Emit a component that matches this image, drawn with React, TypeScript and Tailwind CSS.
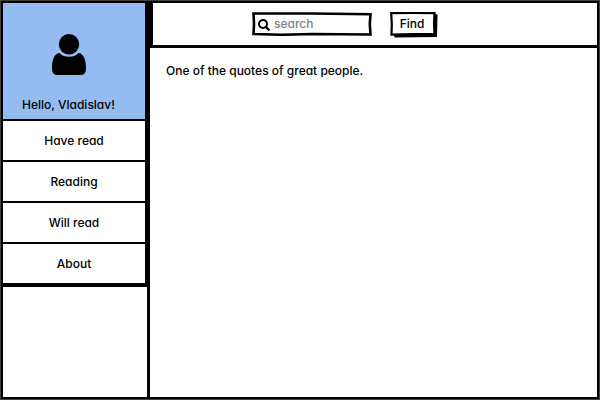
import React from "react";

const links = ["Have read", "Reading", "Will read", "About"];

function UserIcon() {
  return (
    <svg viewBox="0 0 34 42" className="h-[42px] w-[34px]" aria-hidden="true">
      <circle cx="17" cy="10.2" r="10.2" />
      <path d="M7.5 19 C10 21.7 13 22.8 17 22.8 C21 22.8 24 21.7 26.5 19 C31 19.2 34 25 34 34 C34 38.5 32.5 41 28.5 41 L5.5 41 C1.5 41 0 38.5 0 34 C0 25 3 19.2 7.5 19 Z" />
    </svg>
  );
}

function SearchIcon() {
  return (
    <svg viewBox="0 0 12 12" className="pointer-events-none absolute left-[6px] top-[7px] h-3 w-3" fill="none" stroke="black" aria-hidden="true">
      <circle cx="5" cy="5" r="4" strokeWidth="2" />
      <path d="M8 8 L10.7 10.7" strokeWidth="2.3" strokeLinecap="round" />
    </svg>
  );
}

export default function App() {
  return (
    <div className="flex min-h-screen bg-neutral-700 p-px font-['Inter','Liberation_Sans',sans-serif] text-xs leading-5 font-medium text-black [font-feature-settings:'cv11']">
      <div className="flex min-w-0 grow border-2 border-black bg-white">
        <aside className="w-[147px] shrink-0 border-r-[3px] border-black">
          <div className="border-b-4 border-r-2 border-black">
            <section className="flex flex-col items-start bg-[#94bbf2] px-[19px] pb-1 pt-[31px]">
              <div className="h-[42px] pl-[30px]">
                <UserIcon />
              </div>
              <p className="mt-[19px] whitespace-nowrap">Hello, Vladislav!</p>
            </section>
            <nav>
              {links.map((label) => (
                <a key={label} href="#" className="flex h-[41px] items-center justify-center border-t-2 border-black">
                  {label}
                </a>
              ))}
            </nav>
          </div>
        </aside>
        <div className="min-w-0 grow">
          <header className="flex h-[45px] items-start gap-[18px] border-b-[3px] border-l-[3px] border-black pl-[99px] pt-[9px]">
            <label className="relative block h-6 w-[120px]">
              <svg viewBox="0 0 120 24" preserveAspectRatio="none" className="absolute inset-0 h-full w-full" fill="none" aria-hidden="true">
                <path d="M1.5 1.5 L60 1.5 L118.5 2.2 L117.8 12 L118.5 22.5 L60 22 L30 22.8 L1.5 22 L2 12 Z" stroke="black" strokeWidth="2.6" />
              </svg>
              <SearchIcon />
              <input
                type="text"
                aria-label="Search"
                placeholder="search"
                className="relative h-6 w-full bg-transparent pb-[2px] pl-[22px] pr-2 outline-none placeholder:text-[#80828a]"
              />
            </label>
            <button type="button" className="relative h-[26px] w-12 pb-[3px] pr-1">
              <svg viewBox="0 0 48 26" preserveAspectRatio="none" className="absolute inset-0 h-full w-full" aria-hidden="true">
                <path d="M4 22 L44 2 L47.5 2.5 L47 25 L4.5 25.5 Z" fill="black" />
                <path d="M1.2 1.2 L23 1 L44.5 1.2 L44 12 L44.5 22 L24 22 L1.5 22.5 L1.8 12 Z" fill="white" stroke="black" strokeWidth="2.2" />
              </svg>
              <span className="relative">Find</span>
            </button>
          </header>
          <main className="px-4 py-[13px]">
            <p>One of the quotes of great people.</p>
          </main>
        </div>
      </div>
    </div>
  );
}
